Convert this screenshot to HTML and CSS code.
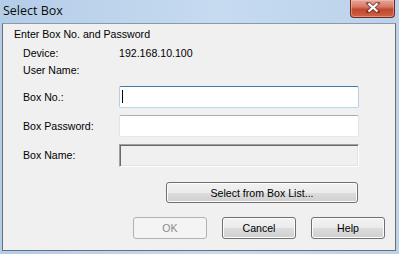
FILE: index.html
```html
<!DOCTYPE html>
<html lang="en">
<head>
    <meta charset="UTF-8">
    <title>Select Box</title>
    <link rel="stylesheet" href="styles.css">
</head>
<body>
    <div class="window">
        <div class="titlebar">
            <span class="title">Select Box</span>
            <div class="close-button">
                <svg width="14" height="11" viewBox="0 0 14 11">
                    <path d="M2 1 L12 10 M12 1 L2 10" stroke="#4a2020" stroke-width="4" stroke-linecap="square" opacity="0.55"/>
                    <path d="M2.5 1.5 L11.5 9.5 M11.5 1.5 L2.5 9.5" stroke="#fff" stroke-width="2.2"/>
                </svg>
            </div>
        </div>
        <div class="client">
            <div class="heading">Enter Box No. and Password</div>
            <div class="info">
                <span class="label">Device:</span>
                <span class="value">192.168.10.100</span>
                <span class="label">User Name:</span>
                <span class="value"></span>
            </div>
            <div class="fields">
                <label class="label">Box No.:</label>
                <div class="textbox focused"><span class="caret"></span></div>
                <label class="label">Box Password:</label>
                <div class="textbox"></div>
                <label class="label">Box Name:</label>
                <div class="textbox disabled"></div>
            </div>
            <div class="list-row">
                <button class="btn select-btn">Select from Box List...</button>
            </div>
            <div class="actions">
                <button class="btn" disabled>OK</button>
                <button class="btn">Cancel</button>
                <button class="btn">Help</button>
            </div>
        </div>
    </div>
</body>
</html>
```

FILE: styles.css
```css
body {
    margin: 0;
    font-family: 'Liberation Sans', Arial, sans-serif;
    font-size: 10.6px;
    color: #000;
}
.window {
    width: 399px;
    height: 254px;
    background: linear-gradient(to right, #b4cde8, #c6dbf0 55%, #bad2ea);
    display: flex;
    flex-direction: column;
    box-sizing: border-box;
}
.titlebar {
    height: 23px;
    display: flex;
    justify-content: space-between;
    align-items: flex-start;
    padding-left: 3px;
    padding-right: 4px;
}
.title {
    font-family: 'Open Sans', 'Liberation Sans', sans-serif;
    font-size: 12.5px;
    line-height: 16px;
    margin-top: 3px;
    color: #0b0b0b;
}
.close-button {
    width: 45px;
    height: 18px;
    border: 1px solid #6b2b22;
    border-top: none;
    border-radius: 0 0 4px 4px;
    background: linear-gradient(to bottom, #e8a697, #d47a66 40%, #c2472e 55%, #cf6246);
    box-shadow: inset 0 0 0 1px rgba(255, 200, 190, 0.45);
    display: flex;
    justify-content: center;
    align-items: center;
    padding-bottom: 2px;
    box-sizing: border-box;
}
.client {
    flex: 1;
    margin: 0 3px 3px 2px;
    background: #f0f0f0;
    border: 1px solid #6d6f73;
    border-top-color: #8a9aab;
    display: flex;
    flex-direction: column;
}
.heading {
    margin: 4px 0 0 11px;
    line-height: 13px;
}
.info {
    display: grid;
    grid-template-columns: 96px auto;
    grid-auto-rows: 17px;
    align-items: center;
    margin: 3px 0 0 20px;
}
.fields {
    display: grid;
    grid-template-columns: 96px 240px;
    grid-auto-rows: 22px;
    row-gap: 7px;
    align-items: center;
    margin: 8px 0 0 20px;
}
.textbox {
    height: 22px;
    box-sizing: border-box;
    background: #fff;
    border: 1px solid #e2e3ea;
    border-top-color: #abadb3;
    border-bottom-color: #e3e9ef;
    border-radius: 2px;
    position: relative;
}
.textbox.focused {
    border-color: #b5cfe7;
    border-top-color: #3d7bad;
    border-bottom-color: #b7d9ed;
}
.caret {
    position: absolute;
    left: 2px;
    top: 3px;
    width: 1px;
    height: 13px;
    background: #000;
}
.textbox.disabled {
    height: 23px;
    background: #f0f0f0;
    border-radius: 0;
    border: 1px solid #fff;
    border-top-color: #a0a0a0;
    border-left-color: #a0a0a0;
    box-shadow: inset 1px 1px 0 #696969, inset -1px -1px 0 #e3e3e3;
}
.btn {
    font-family: inherit;
    font-size: 10.6px;
    color: #000;
    height: 22px;
    padding: 0;
    border: 1px solid #707070;
    border-radius: 3px;
    background: linear-gradient(to bottom, #f2f2f2, #ebebeb 50%, #dddddd 50%, #cfcfcf);
    box-shadow: inset 0 0 0 1px #fcfcfc;
}
.btn:disabled {
    color: #8b8b8b;
    border-color: #adb2b5;
    background: #f4f4f4;
    box-shadow: none;
}
.list-row {
    display: flex;
    justify-content: flex-end;
    margin: 16px 37px 0 0;
}
.select-btn {
    width: 192px;
    height: 21px;
}
.actions {
    display: flex;
    justify-content: flex-end;
    gap: 15px;
    margin: 14px 10px 0 0;
}
.actions .btn {
    width: 74px;
}
```
